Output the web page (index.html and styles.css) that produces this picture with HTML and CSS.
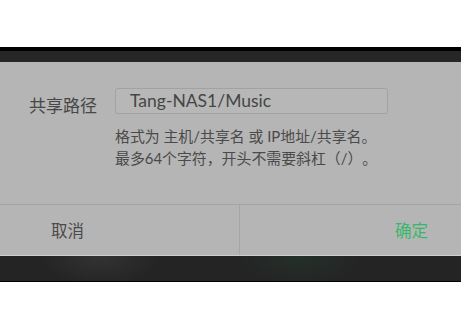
FILE: index.html
```html
<!DOCTYPE html>
<html lang="zh-CN">
<head>
<meta charset="utf-8">
<title>共享路径</title>
<link rel="stylesheet" href="styles.css">
</head>
<body>
<div class="top-space"></div>
<div class="frame">
  <div class="frame-head"></div>
  <div class="dialog">
    <div class="dialog-body">
      <div class="field-row">
        <label class="field-label">共享路径</label>
        <div class="field-input">Tang-NAS1/Music</div>
      </div>
      <div class="field-hint">
        <div>格式为 主机/共享名 或 IP地址/共享名。</div>
        <div>最多64个字符，开头不需要斜杠（/）。</div>
      </div>
    </div>
    <div class="dialog-actions">
      <div class="btn btn-cancel">取消</div>
      <div class="btn btn-ok">确定</div>
    </div>
  </div>
  <div class="frame-foot"></div>
</div>
</body>
</html>
```
FILE: styles.css
```css
html, body {
  margin: 0;
  padding: 0;
  background: #ffffff;
}
body {
  width: 461px;
  height: 331px;
  overflow: hidden;
  font-family: Lato, "Noto Sans CJK SC", sans-serif;
  color: #454545;
  text-spacing-trim: space-all;
}
.top-space {
  height: 47px;
}
.frame {
  border-top: 4px solid #000000;
}
.frame-head {
  height: 11px;
  background: #262626;
}
.dialog {
  background: #b5b5b5;
}
.dialog-body {
  height: 142px;
  padding-top: 26px;
  box-sizing: border-box;
}
.field-row {
  display: flex;
  align-items: flex-start;
  height: 26px;
}
.field-label {
  flex: 0 0 115px;
  box-sizing: border-box;
  padding-left: 29px;
  font-size: 17px;
  line-height: 20px;
  margin-top: 8px;
  white-space: nowrap;
  color: #474747;
}
.field-input {
  flex: 0 0 273px;
  height: 26px;
  box-sizing: border-box;
  border: 1px solid #a2a2a2;
  border-radius: 3px;
  background: #b7b7b7;
  padding-left: 14px;
  font-size: 17.5px;
  line-height: 24px;
  color: #464646;
}
.field-hint {
  margin-left: 115px;
  margin-top: 11px;
  font-size: 14.9px;
  line-height: 22px;
  color: #4a4a4a;
  white-space: nowrap;
}
.dialog-actions {
  display: flex;
  height: 52px;
  border-top: 1px solid #a4a4a4;
  border-bottom: 1px solid #cfcfcf;
  box-sizing: border-box;
}
.btn {
  flex: 1;
  display: flex;
  align-items: center;
  font-size: 16.5px;
}
.btn-cancel {
  padding-left: 51px;
  border-right: 1px solid #a6a6a6;
  color: #4a4a4a;
}
.btn-ok {
  justify-content: flex-end;
  padding-right: 33px;
  color: #36b86b;
}
.frame-foot {
  height: 26px;
  background: radial-gradient(ellipse 60px 30px at 100px 0, #333 0%, rgba(38,38,38,0) 100%),
              radial-gradient(ellipse 60px 30px at 300px 0, #24302a 0%, rgba(38,38,38,0) 100%),
              #242424;
  border-bottom: 1px solid #000;
  box-sizing: border-box;
}
```
